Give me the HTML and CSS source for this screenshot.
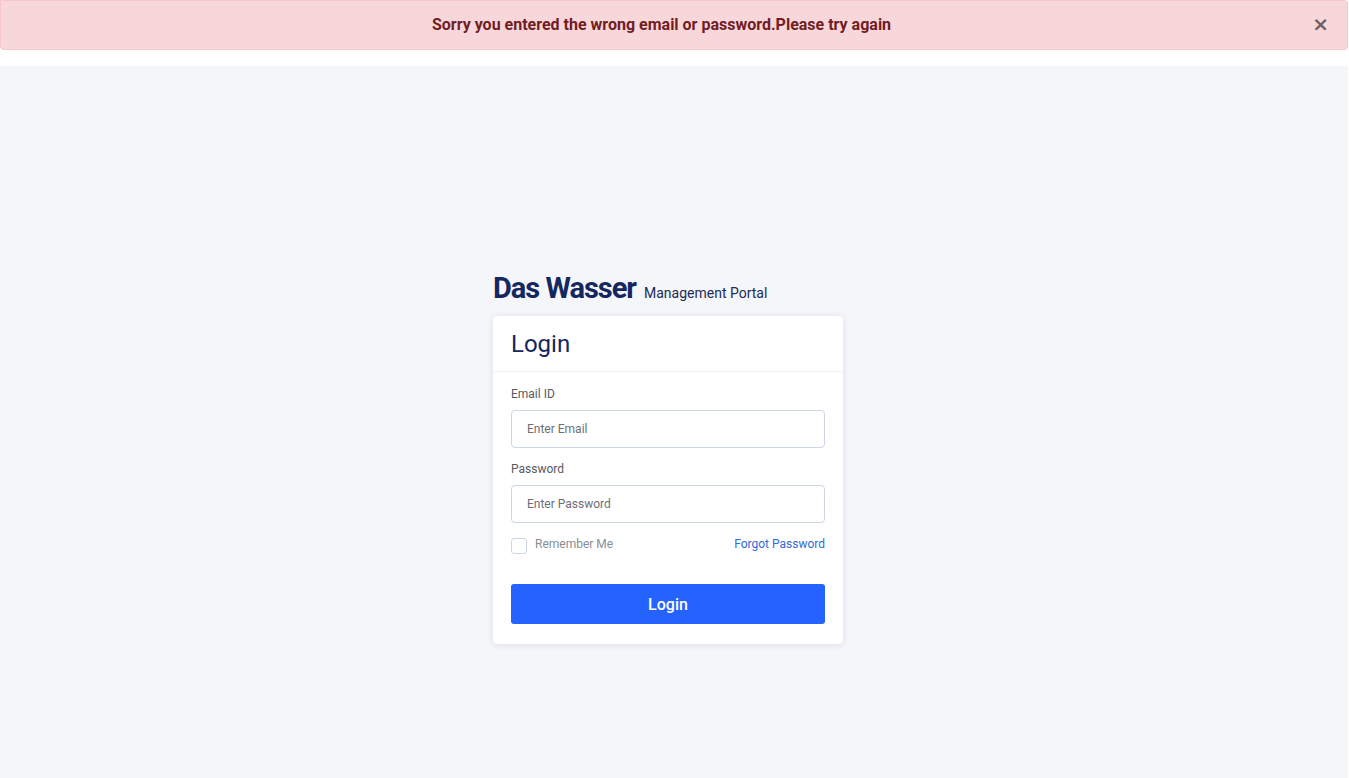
FILE: index.html
```html
<!DOCTYPE html>
<html>
<head>
<meta charset="utf-8">
<link rel="stylesheet" href="styles.css">
</head>
<body>
<div class="page">
  <div class="alert">
    <span class="alert-text">Sorry you entered the wrong email or password.Please try again</span>
    <button class="alert-close" aria-label="Close">&times;</button>
  </div>
  <div class="strip"></div>
  <main class="main">
    <div class="login-wrap">
      <div class="brand">
        <span class="brand-name">Das Wasser</span>
        <span class="brand-sub">Management Portal</span>
      </div>
      <div class="card">
        <div class="card-header">Login</div>
        <div class="card-body">
          <label class="label">Email ID</label>
          <input class="input" type="text" placeholder="Enter Email">
          <label class="label">Password</label>
          <input class="input" type="password" placeholder="Enter Password">
          <div class="options">
            <label class="remember"><span class="checkbox"></span>Remember Me</label>
            <a class="forgot" href="#">Forgot Password</a>
          </div>
          <button class="btn">Login</button>
        </div>
      </div>
    </div>
  </main>
</div>
</body>
</html>
```
FILE: styles.css
```css
* { box-sizing: border-box; }
html, body { margin: 0; padding: 0; }
body {
  font-family: Roboto, "Liberation Sans", sans-serif;
  background: #ffffff;
  width: 1349px;
  height: 778px;
  overflow: hidden;
}
.page {
  width: 1348px;
  height: 778px;
  display: flex;
  flex-direction: column;
}
.alert {
  height: 50px;
  background: #f8d7da;
  border: 1px solid #f5c6cb;
  border-radius: 0 4px 4px 4px;
  display: flex;
  align-items: center;
  justify-content: center;
  padding-right: 25px;
  position: relative;
  color: #721c24;
}
.alert-text {
  font-size: 16px;
  font-weight: 700;
  margin-top: -1px;
}
.alert-close {
  position: absolute;
  right: 18px;
  top: 13px;
  background: none;
  border: none;
  padding: 0;
  font-family: "DejaVu Sans", sans-serif;
  font-size: 20px;
  font-weight: 700;
  line-height: 20px;
  color: #6f6264;
}
.strip { height: 16px; background: #ffffff; }
.main {
  flex: 1;
  background: #f5f6fa;
  display: flex;
  justify-content: center;
  padding-top: 204px;
}
.login-wrap {
  width: 350px;
  margin-left: -12px;
}
.brand {
  display: flex;
  align-items: baseline;
  color: #14275e;
  height: 36px;
  margin-bottom: 10px;
}
.brand-name {
  font-size: 29px;
  font-weight: 700;
  letter-spacing: -1px;
  line-height: 36px;
}
.brand-sub {
  font-size: 14px;
  margin-left: 8px;
  color: #1c2a55;
}
.card {
  background: #ffffff;
  border-radius: 4px;
  box-shadow: 0 1px 6px rgba(30, 40, 80, 0.12);
}
.card-header {
  height: 56px;
  border-bottom: 1px solid #eef0f4;
  padding: 0 18px;
  display: flex;
  align-items: center;
  font-size: 24px;
  color: #14275e;
}
.card-body {
  padding: 14px 18px 20px;
  display: flex;
  flex-direction: column;
}
.label {
  font-size: 12px;
  color: #555a63;
  line-height: 16px;
  margin-bottom: 8px;
}
.input {
  height: 38px;
  border: 1px solid #cdd6e8;
  border-radius: 4px;
  padding: 0 15px;
  font-family: inherit;
  font-size: 12px;
  color: #333;
  margin-bottom: 13px;
  outline: none;
}
.input::placeholder { color: #6b6f77; }
.options {
  display: flex;
  justify-content: space-between;
  align-items: center;
  font-size: 12px;
  height: 16px;
}
.remember {
  display: flex;
  align-items: center;
  color: #8a8d93;
}
.checkbox {
  width: 16px;
  height: 16px;
  border: 1px solid #cdd6e8;
  border-radius: 3px;
  margin-right: 8px;
  margin-top: 4px;
  background: #fff;
}
.forgot {
  color: #2f6bd8;
  text-decoration: none;
}
.btn {
  margin-top: 32px;
  height: 40px;
  border: none;
  border-radius: 3px;
  background: #2563ff;
  color: #fff;
  font-family: inherit;
  font-size: 16px;
  font-weight: 500;
}
```
